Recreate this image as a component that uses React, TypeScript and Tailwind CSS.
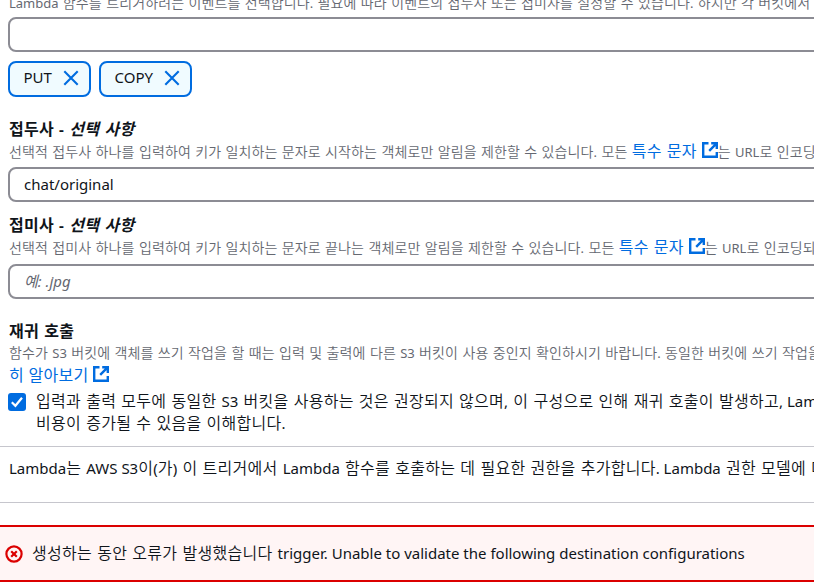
import { Fragment } from "react";

type TextProps = { children: string; latin?: string };

// Latin runs get their own metrics; Hangul keeps those of the parent line.
function Mixed({ children, latin = "text-[15px]" }: TextProps) {
  const parts = children.split(/([\x21-\x7e]+(?: [\x21-\x7e]+)*)/);
  return (
    <>
      {parts.map((part, i) =>
        i % 2 === 1 ? (
          <span key={i} className={`font-normal tracking-normal [word-spacing:0px] ${latin}`}>
            {part}
          </span>
        ) : (
          <Fragment key={i}>{part}</Fragment>
        ),
      )}
    </>
  );
}

function ExternalIcon() {
  return (
    <svg
      className="inline-block h-4 w-4 shrink-0 align-[-1px]"
      viewBox="0 0 16 16"
      fill="none"
      stroke="#006ce0"
      strokeWidth="2.4"
    >
      <path d="M6.5 1.2H1.2V14.8H14.8V10" />
      <path d="M9.2 1.2H14.8V7M14.6 1.4L7.2 8.8" />
    </svg>
  );
}

function Token({ label, width }: { label: string; width: string }) {
  return (
    <div
      className={`flex h-9 items-center justify-between rounded-lg border-2 border-[#006ce0] bg-[#f0fbff] pl-[13.5px] pr-[10px] ${width}`}
    >
      <span className="-mt-[3px] text-[15px] leading-none">{label}</span>
      <svg className="-mt-[3px] h-4 w-4" viewBox="0 0 16 16" fill="none" stroke="#006ce0" strokeWidth="2.1">
        <path d="M1.3 1.3L14.7 14.7M14.7 1.3L1.3 14.7" />
      </svg>
    </div>
  );
}

function Field({ children }: { children?: React.ReactNode }) {
  return (
    <div className="ml-2 flex h-[35px] w-[900px] shrink-0 items-center rounded-lg border-2 border-[#8c8c94] bg-white pl-[14px] text-[15px]">
      {children}
    </div>
  );
}

function Label({ children, optional }: { children: string; optional?: boolean }) {
  return (
    <div className="flex h-[22px] shrink-0 items-center pl-[9px] text-[16px] font-bold tracking-[0.28px] [word-spacing:0.85px]">
      {children}
      {optional && (
        <>
          <span className="whitespace-pre text-[15px]"> - </span>
          <em>선택 사항</em>
        </>
      )}
    </div>
  );
}

const large = "text-[16px] font-[350] tracking-[0.28px] [word-spacing:0.7px]";
const desc =
  "h-[22px] shrink-0 pl-[9px] text-[14px] font-[350] leading-[20px] tracking-[0.12px] [word-spacing:0.54px] text-[#656871]";
const link = "text-[16px] font-normal tracking-[0.28px] text-[#006ce0]";
const small = "text-[13px]";

export default function App() {
  return (
    <div className="flex h-[585px] w-[814px] flex-col overflow-hidden whitespace-nowrap bg-white font-['Noto_Sans','Noto_Sans_CJK_KR',sans-serif] text-[#0f141a]">
      <div className={`-mt-[7px] ${desc}`}>
        <Mixed latin={small}>
          Lambda 함수를 트리거하려는 이벤트를 선택합니다. 필요에 따라 이벤트의 접두사 또는 접미사를 설정할 수 있습니다. 하지만 각 버킷에서
        </Mixed>
      </div>
      <div className="mt-0.5 flex flex-col">
        <Field />
      </div>
      <div className="mt-[9px] flex gap-2 pl-2">
        <Token label="PUT" width="w-[83px]" />
        <Token label="COPY" width="w-[93px]" />
      </div>

      <div className="mt-[21px] flex flex-col">
        <Label optional>접두사</Label>
        <div className={`mt-px ${desc}`}>
          <Mixed latin={small}>
            선택적 접두사 하나를 입력하여 키가 일치하는 문자로 시작하는 객체로만 알림을 제한할 수 있습니다. 모든
          </Mixed>{" "}
          <span className={link}>
            특수 문자 <ExternalIcon />
          </span>
          <Mixed latin={small}>는 URL로 인코딩되어야 합니다.</Mixed>
        </div>
        <div className="mt-1 flex flex-col">
          <Field>chat/original</Field>
        </div>
      </div>

      <div className="mt-3 flex flex-col">
        <Label optional>접미사</Label>
        <div className={`mt-px ${desc}`}>
          <Mixed latin={small}>
            선택적 접미사 하나를 입력하여 키가 일치하는 문자로 끝나는 객체로만 알림을 제한할 수 있습니다. 모든
          </Mixed>{" "}
          <span className={link}>
            특수 문자 <ExternalIcon />
          </span>
          <Mixed latin={small}>는 URL로 인코딩되어야 합니다.</Mixed>
        </div>
        <div className="mt-[5px] flex flex-col">
          <Field>
            <em className="text-[#656871]">예: .jpg</em>
          </Field>
        </div>
      </div>

      <div className="mt-[21px] flex flex-col">
        <Label>재귀 호출</Label>
        <div className={`mt-px ${desc}`}>
          <Mixed latin={small}>
            함수가 S3 버킷에 객체를 쓰기 작업을 할 때는 입력 및 출력에 다른 S3 버킷이 사용 중인지 확인하시기 바랍니다. 동일한 버킷에 쓰기 작업을
          </Mixed>
        </div>
        <div className={`h-[21px] pl-[9px] leading-[20px] ${link}`}>
          히 알아보기 <ExternalIcon />
        </div>
      </div>

      <div className="mt-1 flex shrink-0 gap-[10px] pl-2">
        <span className="mt-[3px] flex h-[18px] w-[18px] shrink-0 items-center justify-center rounded-[3px] bg-[#006ce0]">
          <svg className="h-[18px] w-[18px]" viewBox="0 0 18 18" fill="none" stroke="white" strokeWidth="2.2">
            <path d="M3.8 9.2L7.4 12.8L14 4.8" />
          </svg>
        </span>
        <div className={`leading-[22px] ${large}`}>
          <Mixed>입력과 출력 모두에 동일한 S3 버킷을 사용하는 것은 권장되지 않으며, 이 구성으로 인해 재귀 호출이 발생하고, Lambda</Mixed>
          <br />
          <Mixed>비용이 증가될 수 있음을 이해합니다.</Mixed>
        </div>
      </div>

      <div className={`mt-3 h-[57px] shrink-0 border-y border-[#c6c6cd] pl-[9px] pt-[10px] leading-[22px] ${large}`}>
        <Mixed>Lambda는 AWS S3이(가) 이 트리거에서 Lambda 함수를 호출하는 데 필요한 권한을 추가합니다. Lambda 권한 모델에 대해</Mixed>
      </div>

      <div className="mt-[22px] flex h-[57px] shrink-0 items-center border-y-2 border-[#db0000] bg-[#fff5f5] pl-[5px]">
        <svg className="h-[18px] w-[18px] shrink-0" viewBox="0 0 18 18" fill="none" stroke="#db0000" strokeWidth="2.2">
          <circle cx="9" cy="9" r="7.6" />
          <path d="M6.2 6.2L11.8 11.8M11.8 6.2L6.2 11.8" />
        </svg>
        <div className={`-mt-0.5 ml-[9px] ${large}`}>
          <Mixed>생성하는 동안 오류가 발생했습니다 trigger. Unable to validate the following destination configurations</Mixed>
        </div>
      </div>
    </div>
  );
}
